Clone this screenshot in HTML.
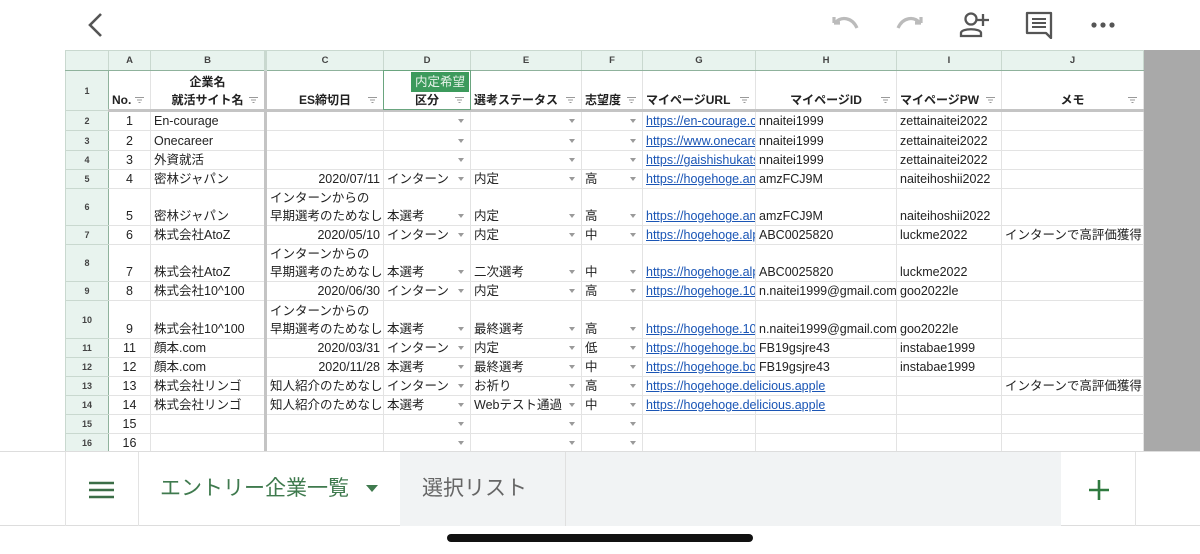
<!DOCTYPE html>
<html><head><meta charset="utf-8"><style>
*{margin:0;padding:0;box-sizing:border-box}
body{width:1200px;height:554px;background:#fff;position:relative;overflow:hidden;font-family:"Liberation Sans","Noto Sans CJK JP",sans-serif;color:#222}
.top{position:absolute;left:0;top:0;width:1200px;height:50px;background:#fff}
.gray{position:absolute;left:1143px;top:50px;width:57px;height:401px;background:#a9a9a9}
table{position:absolute;left:65px;top:50px;border-collapse:collapse;table-layout:fixed;width:1078px}
td{border:1px solid #e3e3e3;font-size:12.5px;white-space:nowrap;overflow:hidden;padding:0 3px;vertical-align:bottom;line-height:18px;position:relative}
tr.ch td{background:#e8f3ee;font-size:9.5px;font-weight:bold;text-align:center;vertical-align:middle;color:#444;border-color:#c9d8cf;border-bottom:1px solid #8fb29c}
td.rn{background:#e8f3ee;font-size:9px;font-weight:bold;text-align:center;vertical-align:middle;color:#444;border-color:#c9d8cf;border-right:1px solid #8fb29c}
tr.h td{font-weight:bold;text-align:center;font-size:12px;border-bottom:3px solid #c4c4c4}
tr.h td.rn{border-bottom:1px solid #c9d8cf;font-size:9px}
.c{text-align:center}.r{text-align:right}
.thick{border-left:3px solid #c4c4c4}
.dd::after{content:"";position:absolute;right:6px;bottom:7px;border-left:3px solid transparent;border-right:3px solid transparent;border-top:4px solid #9a9a9a}
.f{position:absolute;right:6px;bottom:6px;width:9px;height:6px}
a{color:#1a55b5;text-decoration:underline}
.ltag{position:absolute;left:411px;top:72px;width:58px;height:20px;background:#3c9a5c;color:#e8f3ea;font-size:12.5px;text-align:center;line-height:20px}
.dsel{position:absolute;left:383px;top:70px;width:88px;height:40px;border:1px solid #6aa57f}
.bar{position:absolute;left:0;top:451px;width:1200px;height:75px;background:#fff;border-top:1px solid #ddd;border-bottom:1px solid #ddd}
</style></head><body>
<div class="top">
<svg style="position:absolute;left:86px;top:12px" width="20" height="26"><path d="M15 2 L4 13 L15 24" stroke="#555" stroke-width="2.6" fill="none"/></svg>
<svg style="position:absolute;left:830px;top:14px" width="32" height="22"><path d="M4 9 L4 3 M4 9 L10 9 M5 9 C11 2 22 3 27 14" stroke="#bbb" stroke-width="3.2" fill="none"/></svg>
<svg style="position:absolute;left:894px;top:14px" width="32" height="22"><path d="M27 9 L27 3 M27 9 L21 9 M26 9 C20 2 9 3 4 14" stroke="#bbb" stroke-width="3.2" fill="none"/></svg>
<svg style="position:absolute;left:958px;top:11px" width="34" height="28"><circle cx="13" cy="8" r="5.5" stroke="#555" stroke-width="2.3" fill="none"/><path d="M3 25 L3 22 C3 17 23 17 23 22 L23 25 Z" stroke="#555" stroke-width="2.3" fill="none"/><path d="M25 3 V15 M19 9 H31" stroke="#555" stroke-width="2.3"/></svg>
<svg style="position:absolute;left:1025px;top:11px" width="30" height="28"><path d="M2 2 H26 V22 L26 27 L21 22 H2 Z" stroke="#555" stroke-width="2.3" fill="none" stroke-linejoin="round"/><path d="M7 8 H21 M7 12 H21 M7 16 H21" stroke="#555" stroke-width="2"/></svg>
<svg style="position:absolute;left:1090px;top:20px" width="26" height="10"><circle cx="4" cy="5" r="2.6" fill="#555"/><circle cx="13" cy="5" r="2.6" fill="#555"/><circle cx="22" cy="5" r="2.6" fill="#555"/></svg>
</div>
<div class="gray"></div>
<svg width="0" height="0" style="position:absolute"><defs><symbol id="fl" viewBox="0 0 9 6"><path d="M0 0.5H9M2 3H7M3.5 5.5H5.5" stroke="#999" stroke-width="1"/></symbol></defs></svg>
<table>
<colgroup><col style="width:43px"><col style="width:42px"><col style="width:115px"><col style="width:118px"><col style="width:87px"><col style="width:111px"><col style="width:61px"><col style="width:113px"><col style="width:141px"><col style="width:105px"><col style="width:142px"></colgroup>
<tr class="ch" style="height:20px"><td></td><td>A</td><td>B</td><td class="thick">C</td><td>D</td><td>E</td><td>F</td><td>G</td><td>H</td><td>I</td><td>J</td></tr>
<tr class="h" style="height:40px"><td class="rn">1</td><td style="text-align:left">No.<svg class="f"><use href="#fl"/></svg></td><td>企業名<br>就活サイト名<svg class="f"><use href="#fl"/></svg></td><td class="thick">ES締切日<svg class="f"><use href="#fl"/></svg></td><td>区分<svg class="f"><use href="#fl"/></svg></td><td style="text-align:left">選考ステータス<svg class="f"><use href="#fl"/></svg></td><td style="text-align:left">志望度<svg class="f"><use href="#fl"/></svg></td><td style="text-align:left">マイページURL<svg class="f"><use href="#fl"/></svg></td><td>マイページID<svg class="f"><use href="#fl"/></svg></td><td style="text-align:left">マイページPW<svg class="f"><use href="#fl"/></svg></td><td>メモ<svg class="f"><use href="#fl"/></svg></td></tr>
<tr style="height:20px"><td class="rn">2</td><td class="c">1</td><td>En-courage</td><td class="thick"></td><td class="dd"></td><td class="dd"></td><td class="dd"></td><td><a>https://en-courage.com</a></td><td>nnaitei1999</td><td>zettainaitei2022</td><td></td></tr>
<tr style="height:20px"><td class="rn">3</td><td class="c">2</td><td>Onecareer</td><td class="thick"></td><td class="dd"></td><td class="dd"></td><td class="dd"></td><td><a>https://www.onecareer</a></td><td>nnaitei1999</td><td>zettainaitei2022</td><td></td></tr>
<tr style="height:19px"><td class="rn">4</td><td class="c">3</td><td>外資就活</td><td class="thick"></td><td class="dd"></td><td class="dd"></td><td class="dd"></td><td><a>https://gaishishukatsu</a></td><td>nnaitei1999</td><td>zettainaitei2022</td><td></td></tr>
<tr style="height:19px"><td class="rn">5</td><td class="c">4</td><td>密林ジャパン</td><td class="thick r">2020/07/11</td><td class="dd">インターン</td><td class="dd">内定</td><td class="dd">高</td><td><a>https://hogehoge.amazon</a></td><td>amzFCJ9M</td><td>naiteihoshii2022</td><td></td></tr>
<tr style="height:37px"><td class="rn">6</td><td class="c">5</td><td>密林ジャパン</td><td class="thick">インターンからの<br>早期選考のためなし</td><td class="dd">本選考</td><td class="dd">内定</td><td class="dd">高</td><td><a>https://hogehoge.amazon</a></td><td>amzFCJ9M</td><td>naiteihoshii2022</td><td></td></tr>
<tr style="height:19px"><td class="rn">7</td><td class="c">6</td><td>株式会社AtoZ</td><td class="thick r">2020/05/10</td><td class="dd">インターン</td><td class="dd">内定</td><td class="dd">中</td><td><a>https://hogehoge.alpha</a></td><td>ABC0025820</td><td>luckme2022</td><td>インターンで高評価獲得</td></tr>
<tr style="height:36px"><td class="rn">8</td><td class="c">7</td><td>株式会社AtoZ</td><td class="thick">インターンからの<br>早期選考のためなし</td><td class="dd">本選考</td><td class="dd">二次選考</td><td class="dd">中</td><td><a>https://hogehoge.alpha</a></td><td>ABC0025820</td><td>luckme2022</td><td></td></tr>
<tr style="height:19px"><td class="rn">9</td><td class="c">8</td><td>株式会社10^100</td><td class="thick r">2020/06/30</td><td class="dd">インターン</td><td class="dd">内定</td><td class="dd">高</td><td><a>https://hogehoge.10the</a></td><td>n.naitei1999@gmail.com</td><td>goo2022le</td><td></td></tr>
<tr style="height:38px"><td class="rn">10</td><td class="c">9</td><td>株式会社10^100</td><td class="thick">インターンからの<br>早期選考のためなし</td><td class="dd">本選考</td><td class="dd">最終選考</td><td class="dd">高</td><td><a>https://hogehoge.10the</a></td><td>n.naitei1999@gmail.com</td><td>goo2022le</td><td></td></tr>
<tr style="height:19px"><td class="rn">11</td><td class="c">11</td><td>顔本.com</td><td class="thick r">2020/03/31</td><td class="dd">インターン</td><td class="dd">内定</td><td class="dd">低</td><td><a>https://hogehoge.book</a></td><td>FB19gsjre43</td><td>instabae1999</td><td></td></tr>
<tr style="height:19px"><td class="rn">12</td><td class="c">12</td><td>顔本.com</td><td class="thick r">2020/11/28</td><td class="dd">本選考</td><td class="dd">最終選考</td><td class="dd">中</td><td><a>https://hogehoge.book</a></td><td>FB19gsjre43</td><td>instabae1999</td><td></td></tr>
<tr style="height:19px"><td class="rn">13</td><td class="c">13</td><td>株式会社リンゴ</td><td class="thick">知人紹介のためなし</td><td class="dd">インターン</td><td class="dd">お祈り</td><td class="dd">高</td><td style="overflow:visible"><a>https://hogehoge.delicious.apple</a></td><td></td><td></td><td>インターンで高評価獲得</td></tr>
<tr style="height:19px"><td class="rn">14</td><td class="c">14</td><td>株式会社リンゴ</td><td class="thick">知人紹介のためなし</td><td class="dd">本選考</td><td class="dd">Webテスト通過</td><td class="dd">中</td><td style="overflow:visible"><a>https://hogehoge.delicious.apple</a></td><td></td><td></td><td></td></tr>
<tr style="height:18px"><td class="rn">15</td><td class="c">15</td><td></td><td class="thick"></td><td class="dd"></td><td class="dd"></td><td class="dd"></td><td></td><td></td><td></td><td></td></tr>
<tr style="height:19px"><td class="rn">16</td><td class="c">16</td><td></td><td class="thick"></td><td class="dd"></td><td class="dd"></td><td class="dd"></td><td></td><td></td><td></td><td></td></tr>
</table>
<div class="dsel"></div>
<div class="ltag">内定希望</div>
<div class="bar">
<div style="position:absolute;left:65px;top:0;width:74px;height:74px;border-left:1px solid #e3e3e3;border-right:1px solid #e3e3e3"></div>
<svg style="position:absolute;left:89px;top:29px" width="26" height="18"><path d="M0 2H25M0 9H25M0 16H25" stroke="#3b6e47" stroke-width="2.6"/></svg>
<div style="position:absolute;left:160px;top:20px;font-size:21px;color:#3f7a4e">エントリー企業一覧</div>
<svg style="position:absolute;left:366px;top:33px" width="12" height="8"><path d="M0 0H12L6 7Z" fill="#3f7a4e"/></svg>
<div style="position:absolute;left:400px;top:0;width:661px;height:74px;background:#f1f3f4"></div>
<div style="position:absolute;left:565px;top:0;width:1px;height:74px;background:#e0e0e0"></div>
<div style="position:absolute;left:422px;top:20px;font-size:21px;color:#666">選択リスト</div>
<div style="position:absolute;left:1135px;top:0;width:1px;height:74px;background:#e3e3e3"></div>
<svg style="position:absolute;left:1088px;top:27px" width="22" height="22"><path d="M11 1V21M1 11H21" stroke="#2f7a3f" stroke-width="2.6"/></svg>
</div>
<div style="position:absolute;left:447px;top:534px;width:306px;height:8px;border-radius:4px;background:#111"></div>
</body></html>
